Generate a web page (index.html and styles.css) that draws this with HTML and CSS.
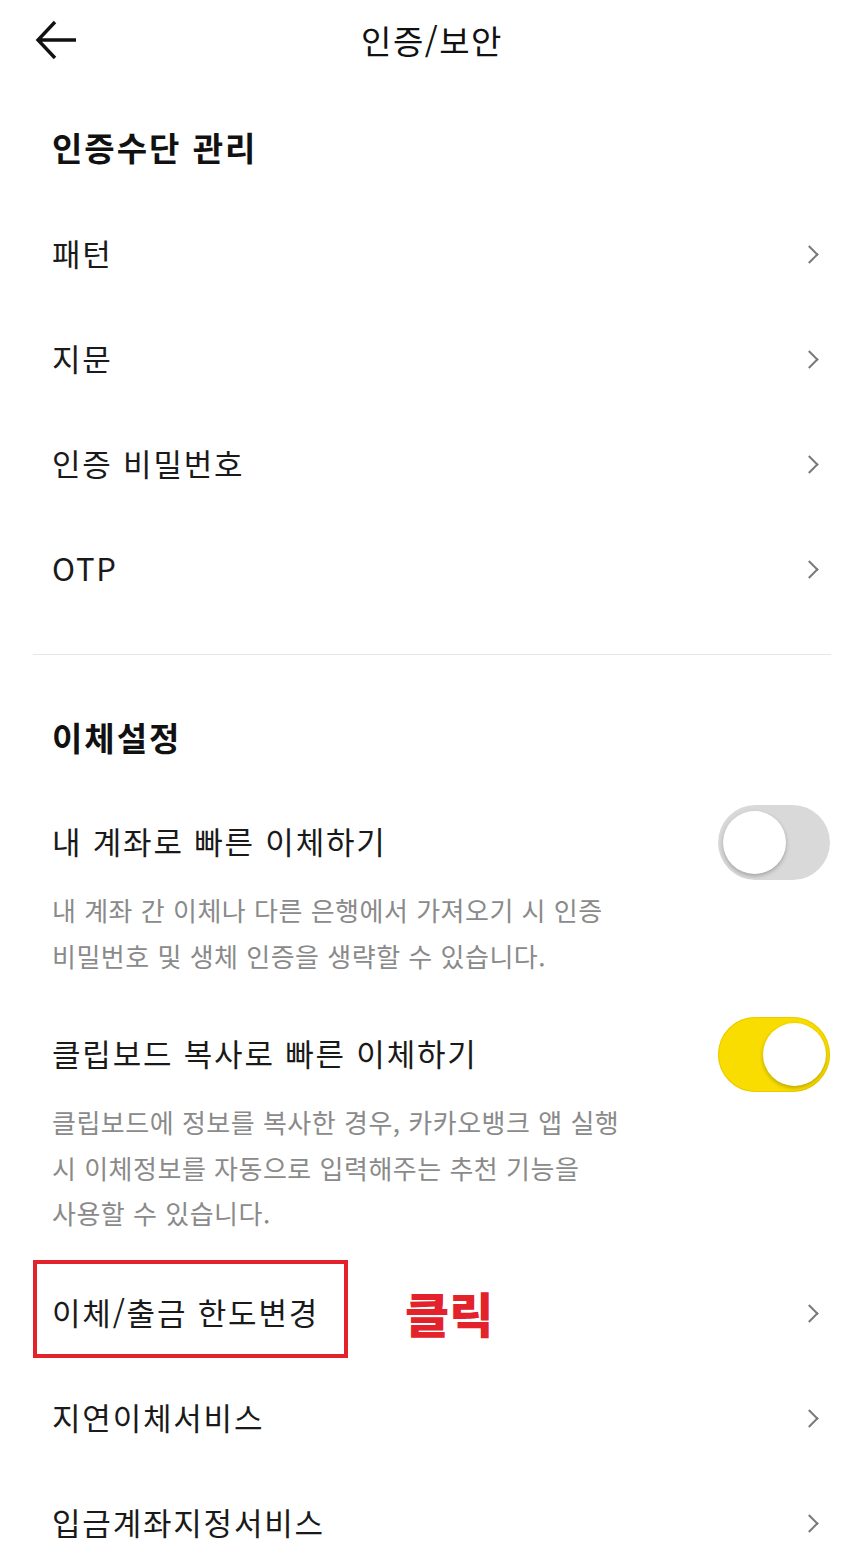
FILE: index.html
```html
<!DOCTYPE html>
<html lang="ko">
<head>
  <meta charset="UTF-8" />
  <meta name="viewport" content="width=device-width, initial-scale=1.0" />
  <title>인증/보안</title>
  <link rel="stylesheet" href="styles.css">
</head>
<body>
  <header class="topbar">
    <button class="back-btn" aria-label="뒤로">
      <svg width="44" height="40" viewBox="0 0 44 40">
        <path d="M4 20 H42 M21 2 L4 20 L21 38" fill="none" stroke="#111" stroke-width="3.4" />
      </svg>
    </button>
    <h1 class="page-title">인증/보안</h1>
  </header>

  <section class="group first">
    <h2 class="group-title">인증수단 관리</h2>
    <a class="row" href="#">패턴<span class="chev"></span></a>
    <a class="row" href="#">지문<span class="chev"></span></a>
    <a class="row" href="#">인증 비밀번호<span class="chev"></span></a>
    <a class="row" href="#">OTP<span class="chev"></span></a>
  </section>

  <hr class="divider" />

  <section class="group">
    <h2 class="group-title">이체설정</h2>

    <div class="toggle-item">
      <div class="toggle-head">
        <span class="toggle-label">내 계좌로 빠른 이체하기</span>
        <span class="switch"></span>
      </div>
      <p class="desc">내 계좌 간 이체나 다른 은행에서 가져오기 시 인증<br>비밀번호 및 생체 인증을 생략할 수 있습니다.</p>
    </div>

    <div class="toggle-item">
      <div class="toggle-head">
        <span class="toggle-label">클립보드 복사로 빠른 이체하기</span>
        <span class="switch on"></span>
      </div>
      <p class="desc">클립보드에 정보를 복사한 경우, 카카오뱅크 앱 실행<br>시 이체정보를 자동으로 입력해주는 추천 기능을<br>사용할 수 있습니다.</p>
    </div>

    <a class="row marked" href="#">
      이체/출금 한도변경<span class="chev"></span>
      <span class="mark-box"></span>
      <span class="mark-label">클릭</span>
    </a>
    <a class="row" href="#">지연이체서비스<span class="chev"></span></a>
    <a class="row" href="#">입금계좌지정서비스<span class="chev"></span></a>
  </section>
</body>
</html>
```

FILE: styles.css
```css
body {
  margin: 0;
  background: #fff;
  font-family: "Noto Sans CJK KR", "Noto Sans", sans-serif;
  color: #1a1a1a;
  overflow: hidden;
}

.topbar {
  position: relative;
  height: 80px;
  display: flex;
  align-items: center;
  justify-content: center;
}

.back-btn {
  position: absolute;
  left: 34px;
  top: 20px;
  padding: 0;
  border: none;
  background: none;
  line-height: 0;
}

.page-title {
  margin: 0;
  font-size: 33px;
  font-weight: 400;
  letter-spacing: 1.5px;
  color: #111;
}

.group.first {
  padding-top: 17px;
}

.group-title {
  box-sizing: border-box;
  margin: 0;
  height: 105px;
  display: flex;
  align-items: center;
  padding: 0 0 6px 52px;
  font-size: 33px;
  font-weight: 700;
  letter-spacing: 2px;
  color: #111;
}

.row {
  box-sizing: border-box;
  position: relative;
  height: 105px;
  display: flex;
  align-items: center;
  justify-content: space-between;
  padding: 0 42px 5px 52px;
  font-size: 31px;
  letter-spacing: 1.8px;
  color: #1a1a1a;
  text-decoration: none;
}

.chev {
  width: 11px;
  height: 11px;
  margin: 4px 6px 0 0;
  border-top: 2px solid #7a7a7a;
  border-right: 2px solid #7a7a7a;
  transform: rotate(45deg);
}

.divider {
  margin: 32px 33px;
  border: none;
  border-top: 1px solid #e6e6e6;
}

.toggle-item {
  padding: 13px 34px 26px 52px;
}

.toggle-head {
  display: flex;
  align-items: center;
  justify-content: space-between;
  font-size: 31px;
  letter-spacing: 1.8px;
}

.toggle-label {
  margin-bottom: 4px;
}

.switch {
  position: relative;
  width: 112px;
  height: 75px;
  border-radius: 38px;
  background: #d9d9d9;
}

.switch::after {
  content: "";
  position: absolute;
  top: 6px;
  left: 5px;
  width: 63px;
  height: 63px;
  border-radius: 50%;
  background: #fff;
  box-shadow: 0 2px 4px rgba(0,0,0,0.25);
}

.switch.on {
  background: #fadd00;
  box-shadow: inset 0 0 0 1px #e8cb00;
}

.switch.on::after {
  left: auto;
  right: 4px;
}

.desc {
  margin: 7px 0 0;
  font-size: 26px;
  letter-spacing: 0.5px;
  line-height: 45.5px;
  color: #8a8a8a;
}

.mark-box {
  position: absolute;
  left: 33px;
  top: -2px;
  width: 315px;
  height: 98px;
  box-sizing: border-box;
  border: 4px solid #e3222b;
}

.mark-label {
  position: absolute;
  left: 405px;
  top: 22px;
  font-size: 48px;
  font-weight: 900;
  letter-spacing: 0;
  line-height: 56px;
  color: #e3222b;
}
```
